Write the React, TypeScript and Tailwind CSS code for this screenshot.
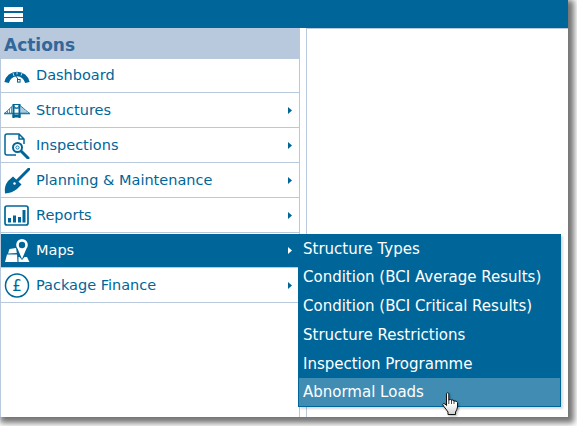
import React from "react";

const Dash = () => (
  <svg width="26" height="15" viewBox="0 0 26 15" fill="none">
    <path d="M2.6 14.5 A10.6 10.6 0 0 1 23.4 14.5" stroke="#006699" strokeWidth="4.6" />
    <path d="M9 5 L10 8 M13 4 V6.5 M18 5 L17 7.5" stroke="#fff" strokeWidth=".8" />
    <path d="M10.5 6 L14.5 12" stroke="#006699" strokeWidth="1" />
    <rect x="13.5" y="11.5" width="2.6" height="2.6" fill="#fff" stroke="#006699" strokeWidth="1" />
  </svg>
);
const Bridge = () => (
  <svg width="26" height="15" viewBox="0 0 26 15" fill="none" stroke="#006699">
    <path d="M0 10.5 H26" strokeWidth="1.6" opacity=".85" />
    <path d="M9.5 1 V15 M15.5 1 V15" strokeWidth="2" />
    <path d="M9 1.5 H16 M9 5 H16" strokeWidth="1.2" />
    <path d="M1 10 L9.5 2 M15.5 2 L25 10 M9.5 2 Q12.5 9 15.5 2" strokeWidth="1" opacity=".8" />
    <path d="M3.5 10 V8 M5.5 10 V6 M7.5 10 V4 M18 10 V4 M20 10 V6 M22 10 V8" strokeWidth="1" opacity=".65" />
    <path d="M8.5 13 H16.5" strokeWidth="3" />
  </svg>
);
const Insp = () => (
  <svg width="26" height="26" viewBox="0 0 26 26" fill="none" stroke="#006699">
    <path d="M3 1 H15 L20 6 V11 M15 1 V6 H20 M12 22 H3 Q1 22 1 20 V3 Q1 1 3 1" strokeWidth="1.5" />
    <circle cx="13.5" cy="14.5" r="4.5" strokeWidth="2" />
    <circle cx="13.5" cy="14.5" r="1.6" strokeWidth=".9" />
    <path d="M17.5 18.5 L24 25" strokeWidth="3" strokeLinecap="round" />
  </svg>
);
const Spade = () => (
  <svg width="26" height="26" viewBox="0 0 26 26" fill="none">
    <path d="M25 1 L13 13" stroke="#006699" strokeWidth="3" strokeLinecap="round" />
    <path d="M9 8.5 L17.5 16.5 L13 21 Q8 25 1 25.5 Q0 18 4 13 Z" fill="#006699" />
    <circle cx="10.5" cy="15.5" r="1.2" fill="#fff" />
  </svg>
);
const Reports = () => (
  <svg width="25" height="21" viewBox="0 0 25 21" fill="none">
    <rect x="1" y="1" width="23" height="19" rx="2" stroke="#006699" strokeWidth="1.7" />
    <path d="M4 13h3v4.500H4zM9 10.500h3v7H9zM14 12h3v5.500h-3zM18.500 5h3v12.500h-3z" fill="#006699" />
  </svg>
);
const MapsIcon = () => (
  <svg width="26" height="24" viewBox="0 0 26 24" fill="none">
    <path d="M3 15.500 L1 23 L13.500 23 L13 15.500 Z" fill="#fff" />
    <path d="M4 14.500 L5.500 10 L12 9 L12.800 14 Z" fill="#fff" />
    <path d="M14.500 18 L15.500 18 L18 21 L20.500 18 L23 18 L25.500 23 L14.500 23 Z" fill="#fff" />
    <path d="M18 20 L13.500 9.500 A5.800 5.800 0 1 1 22.500 9.500 Z" fill="#fff" />
    <circle cx="18" cy="6" r="3.200" fill="#006699" />
  </svg>
);
const Pound = () => (
  <svg width="26" height="25" viewBox="0 0 26 25" fill="none">
    <circle cx="13" cy="12.500" r="11.500" stroke="#006699" strokeWidth="1.500" />
    <text x="13" y="18" textAnchor="middle" fontSize="15" fill="#006699" fontFamily="'DejaVu Sans', sans-serif">£</text>
  </svg>
);
const Arrow = ({ c }: { c: string }) => (
  <svg width="4" height="7" viewBox="0 0 4 7"><path d="M0 0 L4 3.500 L0 7 Z" fill={c} /></svg>
);
const Hand = () => (
  <svg width="17" height="23" viewBox="0 0 17 23">
    <defs>
      <linearGradient id="h" x1="0" y1="0" x2="0" y2="1">
        <stop offset="0.5" stopColor="#fff" />
        <stop offset="1" stopColor="#cfcfcf" />
      </linearGradient>
    </defs>
    <path d="M4.500 1.500 Q5.500 0 6.800 1.500 V8 Q8.500 7 9.500 8 Q11 7.500 12 9 Q14.500 8.500 15.500 10.500 V15 Q15 18 13.500 20 V22.500 H6 V20 Q4 17 1.500 14 Q0 12 1.500 11.500 Q3 11.500 4.500 13.500 Z" fill="url(#h)" stroke="#111" strokeWidth="1" />
    <path d="M6.800 8 V12 M9.500 8 V12 M12 9 V12" stroke="#111" strokeWidth=".8" />
  </svg>
);

const items: { t: string; i: React.ReactNode; arrow?: boolean; active?: boolean }[] = [
  { t: "Dashboard", i: <Dash /> },
  { t: "Structures", i: <Bridge />, arrow: true },
  { t: "Inspections", i: <Insp />, arrow: true },
  { t: "Planning & Maintenance", i: <Spade />, arrow: true },
  { t: "Reports", i: <Reports />, arrow: true },
  { t: "Maps", i: <MapsIcon />, arrow: true, active: true },
  { t: "Package Finance", i: <Pound />, arrow: true },
];
const sub = [
  "Structure Types",
  "Condition (BCI Average Results)",
  "Condition (BCI Critical Results)",
  "Structure Restrictions",
  "Inspection Programme",
  "Abnormal Loads",
];

export default function App() {
  return (
    <div className="w-[577px] h-[426px] bg-white overflow-hidden font-['DejaVu_Sans',sans-serif] text-[14.5px]">
      <div className="relative w-[568px] h-[417px] bg-white flex flex-col shadow-[3px_3px_6px_3px_rgba(0,0,0,0.55)]">
        <div className="h-[28px] bg-[#006699] flex items-center pl-[4px] pt-px shrink-0">
          <div className="w-[19px] flex flex-col gap-[1.5px]">
            <div className="h-[4px] bg-white" />
            <div className="h-[4px] bg-white" />
            <div className="h-[4px] bg-white" />
          </div>
        </div>
        <div className="flex flex-1 min-h-0">
          <div className="w-[300px] shrink-0 flex flex-col">
            <div className="h-[31px] bg-[#b8c9dd] pl-[4px] pt-[4px] flex items-center text-[17px] font-bold text-[#336699]">Actions</div>
            <div className="flex-1 border-l border-r border-[#b8c9dd] flex flex-col">
              {items.map((it, n) => (
                <div key={it.t} className={`${n === 0 ? "h-[34px]" : "h-[35px]"} shrink-0 border-b border-[#b8c9dd] flex items-center pr-[7px] ${it.active ? "bg-[#006699] text-white border-t border-t-white" : "text-[#006699]"} ${n > 0 && !it.active ? "pt-px" : ""}`}>
                  <div className="w-[35px] shrink-0 pl-[3px] flex items-center">{it.i}</div>
                  <span className="flex-1">{it.t}</span>
                  {it.arrow && <Arrow c={it.active ? "#ffffff" : "#006699"} />}
                </div>
              ))}
            </div>
          </div>
          <div className="w-[6px] shrink-0" />
          <div className="flex-1 border-l border-t border-[#b8c9dd]" />
        </div>
        <div className="absolute left-[298px] top-[234px] w-[263px] h-[173px] bg-[#006699] text-white text-[15px] flex flex-col pl-px pr-px pb-px shadow-[2px_2px_2px_rgba(0,0,0,0.15)]">
          {sub.map((s, i) => (
            <div key={s} className={`flex items-center pl-[4px] pt-px ${i === 5 ? "h-[28px] bg-[#418cb3]" : "flex-1"}`}>{s}</div>
          ))}
        </div>
        <div className="absolute left-[442px] top-[392px] drop-shadow-[1px_1px_1px_rgba(0,0,0,0.3)]"><Hand /></div>
      </div>
    </div>
  );
}
